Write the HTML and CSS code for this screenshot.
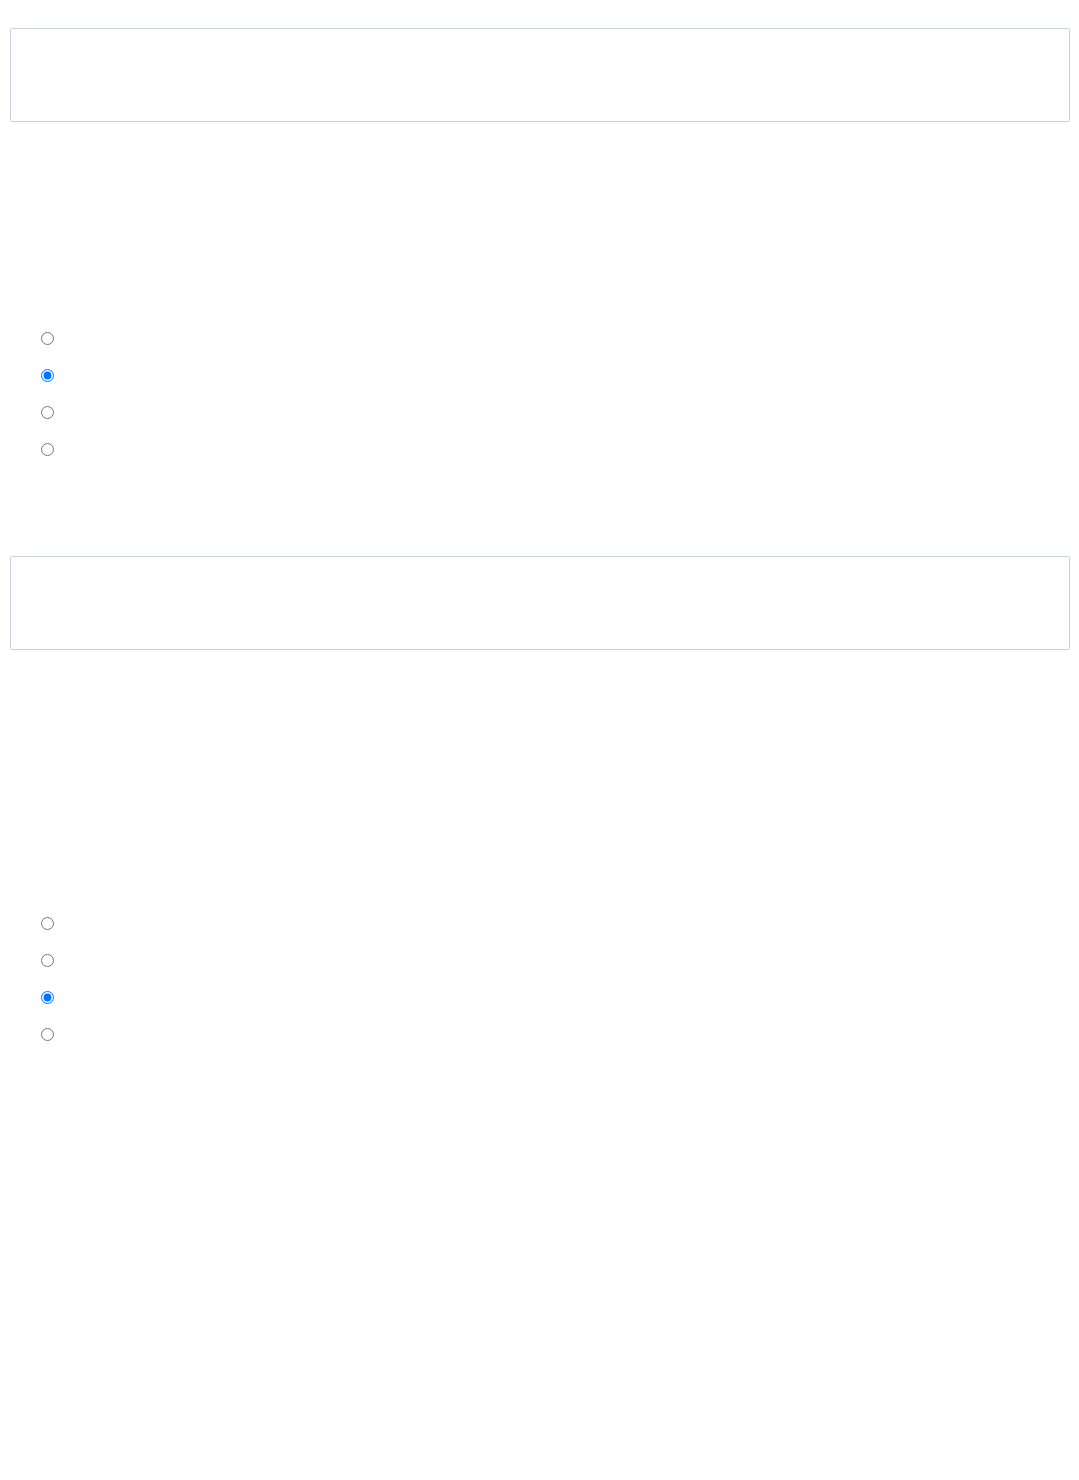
FILE: index.html
```html
<!DOCTYPE html>
<html lang="en">
<head>
  <meta charset="UTF-8">
  <title>Quiz</title>
  <meta name="viewport" content="width=device-width, initial-scale=1.0">
  <link rel="stylesheet" href="styles.css">
</head>
<body>
  <div class="page">
    <div class="question">
      <div class="prompt"></div>
      <div class="options first">
        <label class="option"><input type="radio" name="q1"></label>
        <label class="option"><input type="radio" name="q1" checked></label>
        <label class="option"><input type="radio" name="q1"></label>
        <label class="option"><input type="radio" name="q1"></label>
      </div>
    </div>
    <div class="question">
      <div class="prompt"></div>
      <div class="options second">
        <label class="option"><input type="radio" name="q2"></label>
        <label class="option"><input type="radio" name="q2"></label>
        <label class="option"><input type="radio" name="q2" checked></label>
        <label class="option"><input type="radio" name="q2"></label>
      </div>
    </div>
  </div>
</body>
</html>
```

FILE: styles.css
```css
body {
  font-family: 'Liberation Sans', Arial, sans-serif;
  background-color: #ffffff;
  margin: 0;
  padding: 0;
}
.page {
  padding: 28px 9px 0 10px;
}
.prompt {
  height: 92px;
  border: 1px solid #c9d1dd;
  border-radius: 2px;
}
.options {
  display: flex;
  flex-direction: column;
  padding-left: 26px;
}
.options.first {
  margin-top: 198px;
  margin-bottom: 88px;
}
.options.second {
  margin-top: 255px;
}
.option {
  display: flex;
  align-items: center;
  height: 37px;
}
.option input {
  margin: 0 0 0 5px;
  width: 13px;
  height: 13px;
}
```
